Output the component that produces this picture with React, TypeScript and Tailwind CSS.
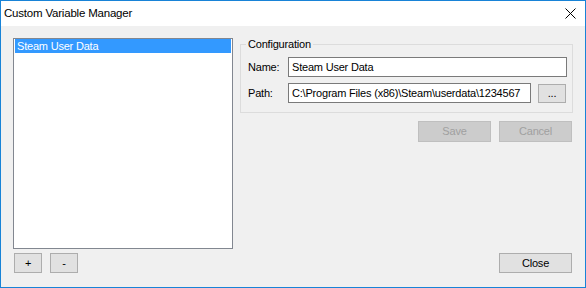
const ui = { fontFamily: '"Liberation Sans", Arial, sans-serif' };

const WinButton: React.FC<{
  label: string;
  className?: string;
  disabled?: boolean;
}> = ({ label, className = "", disabled }) => (
  <button
    className={
      "flex items-center justify-center border text-[11px] leading-none " +
      (disabled
        ? "bg-[#cccccc] border-[#bfbfbf] text-[#a0a0a0] "
        : "bg-[#e1e1e1] border-[#adadad] text-black ") +
      className
    }
  >
    {label}
  </button>
);

export default function App() {
  return (
    <div
      className="w-[586px] h-[288px] border border-[#1883d7] bg-white flex flex-col"
      style={ui}
    >
      {/* title bar */}
      <div className="h-[25px] flex items-center justify-between pl-[3px] pr-[9px] bg-white">
        <span className="text-[11.5px] tracking-[-0.2px] text-black pt-[1px]">
          Custom Variable Manager
        </span>
        <svg width="11" height="11" viewBox="0 0 11 11">
          <path d="M0.5 0.5 L10.5 10.5 M10.5 0.5 L0.5 10.5" stroke="#000" strokeWidth="1" />
        </svg>
      </div>

      <div className="flex-1 bg-[#f0f0f0] flex items-stretch pl-[12px] pt-[12px] text-[11px] tracking-[-0.2px]">
        {/* left column */}
        <div className="w-[220px] flex flex-col self-start">
          <div className="h-[211px] bg-white border border-[#828790] px-[1px]">
            <div className="h-[14px] bg-[#3399ff] text-white leading-[14px] pl-[2px]">
              Steam User Data
            </div>
          </div>
          <div className="flex gap-[8px] mt-[4px] ml-[1px]">
            <WinButton label="+" className="w-[28px] h-[20px]" />
            <WinButton label="-" className="w-[28px] h-[20px]" />
          </div>
        </div>

        {/* right column */}
        <div className="ml-[7px] w-[333px] flex flex-col">
          <fieldset className="border border-[#dcdcdc] pl-[7px] pr-[5px] pt-[6px] pb-[9px]">
            <legend className="ml-[-2px] px-[2px] leading-[13px] text-black">
              Configuration
            </legend>
            <div className="flex items-center h-[20px]">
              <span className="w-[40px] text-black">Name:</span>
              <div className="w-[279px] h-[20px] bg-white border border-[#7a7a7a] flex items-center pl-[3px] text-black">
                Steam User Data
              </div>
            </div>
            <div className="flex items-center h-[20px] mt-[6px]">
              <span className="w-[40px] text-black">Path:</span>
              <div className="w-[243px] h-[20px] bg-white border border-[#7a7a7a] flex items-center pl-[3px] text-black whitespace-nowrap overflow-hidden">
                C:\Program Files (x86)\Steam\userdata\1234567
              </div>
              <WinButton label="..." className="ml-[7px] w-[28px] h-[19px]" />
            </div>
          </fieldset>

          <div className="flex justify-end gap-[8px] mt-[8px] mr-[1px]">
            <WinButton label="Save" disabled className="w-[73px] h-[21px]" />
            <WinButton label="Cancel" disabled className="w-[73px] h-[21px]" />
          </div>

          <div className="mt-auto flex justify-end mr-[1px] mb-[14px]">
            <WinButton label="Close" className="w-[73px] h-[20px]" />
          </div>
        </div>
      </div>
    </div>
  );
}
